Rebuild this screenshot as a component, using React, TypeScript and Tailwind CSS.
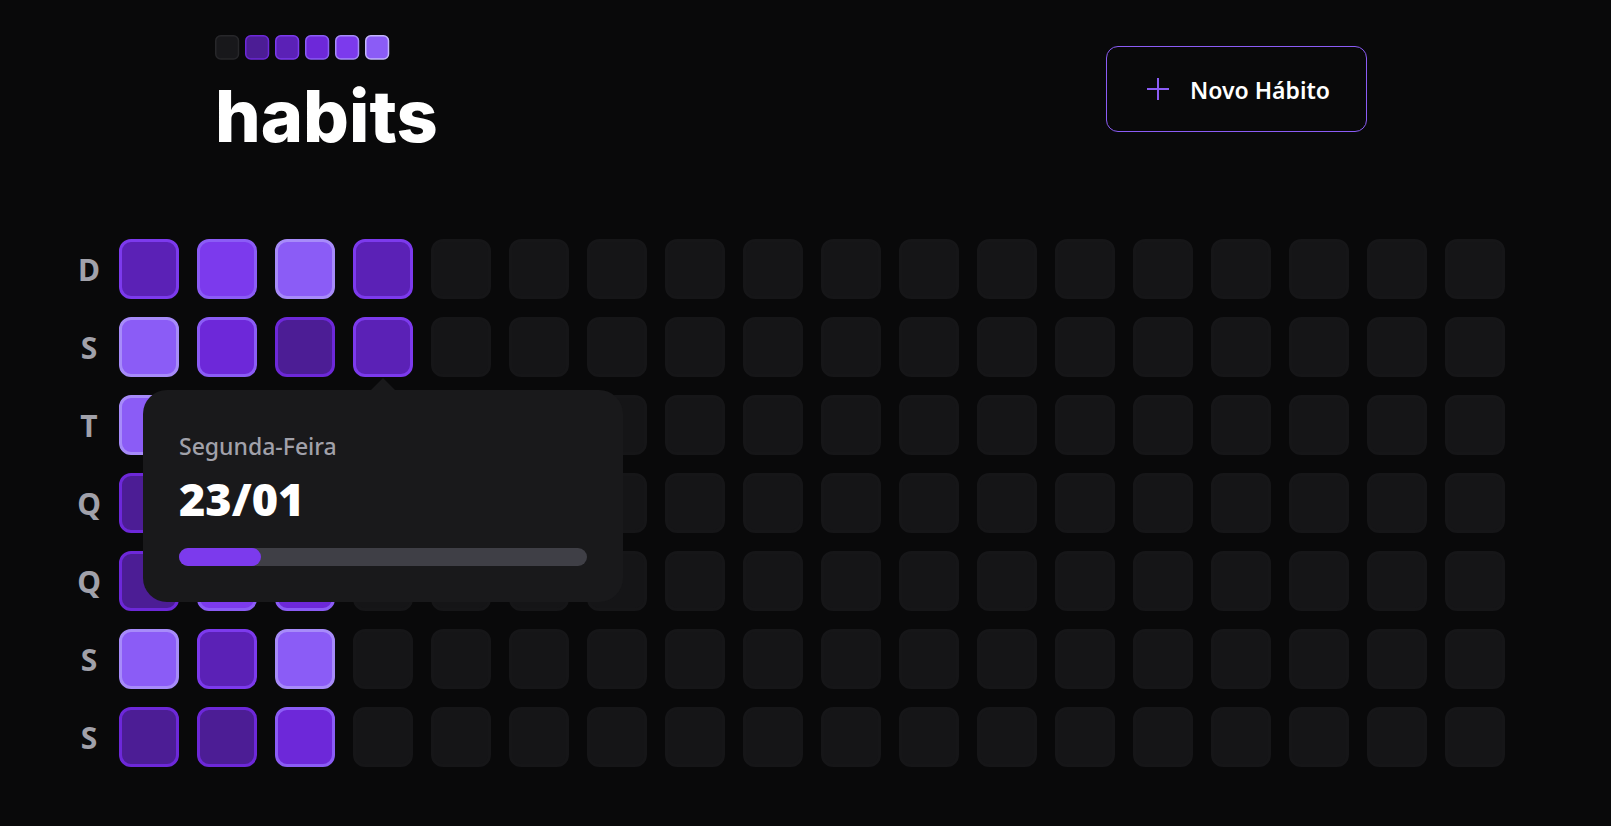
const LEVELS = [
  "bg-[#151517] border-[#161618]",
  "bg-[#4c1d95] border-[#6d28d9]",
  "bg-[#5b21b6] border-[#7c3aed]",
  "bg-[#6d28d9] border-[#8b5cf6]",
  "bg-[#7c3aed] border-[#8b5cf6]",
  "bg-[#8b5cf6] border-[#a78bfa]",
];

const LOGO_SWATCHES = [
  { fill: "#18181B", stroke: "#27272A" },
  { fill: "#4C1D95", stroke: "#6D28D9" },
  { fill: "#5B21B6", stroke: "#7C3AED" },
  { fill: "#6D28D9", stroke: "#8B5CF6" },
  { fill: "#7C3AED", stroke: "#A78BFA" },
  { fill: "#8B5CF6", stroke: "#C4B5FD" },
];

const WEEKS = 18;

const DAYS = [
  { label: "D", name: "Domingo", levels: [2, 4, 5, 2] },
  { label: "S", name: "Segunda-Feira", levels: [5, 3, 1, 2] },
  { label: "T", name: "Terça-Feira", levels: [5, 2, 3] },
  { label: "Q", name: "Quarta-Feira", levels: [1, 3, 4] },
  { label: "Q", name: "Quinta-Feira", levels: [1, 4, 3] },
  { label: "S", name: "Sexta-Feira", levels: [5, 2, 5] },
  { label: "S", name: "Sábado", levels: [1, 1, 3] },
];

const OPEN_DAY = { row: 1, week: 3 };

function Logo() {
  return (
    <div>
      <svg width="175" height="26" viewBox="0 0 175 26" aria-hidden="true">
        {LOGO_SWATCHES.map((s, i) => (
          <rect
            key={s.fill}
            x={0.75 + i * 30}
            y="0.75"
            width="22.75"
            height="23.25"
            rx="5"
            fill={s.fill}
            stroke={s.stroke}
            strokeWidth="1.5"
          />
        ))}
      </svg>
      <h1 className="font-[Inter,sans-serif] text-[72px] leading-[110px] font-extrabold text-white">habits</h1>
    </div>
  );
}

function Header() {
  return (
    <header className="mx-auto flex w-full max-w-[1152px] items-start justify-between">
      <Logo />
      <button
        type="button"
        className="mt-[11px] flex items-center gap-[18px] rounded-xl border border-[#8b5cf6] px-9 pt-[25px] pb-[23px] text-[23px] leading-9 font-semibold text-white"
      >
        <svg width="29" height="30" viewBox="0 0 29 30" className="-mt-0.5" aria-hidden="true">
          <path d="M15 4v22M4 15h22" stroke="#8b5cf6" strokeWidth="2" />
        </svg>
        Novo Hábito
      </button>
    </header>
  );
}

function DayPopover() {
  return (
    <div
      role="dialog"
      aria-label="Segunda-Feira, 23/01"
      className="absolute top-full left-1/2 z-10 mt-px flex w-[480px] -translate-x-1/2 flex-col items-center"
    >
      <svg width="24" height="12" viewBox="0 0 24 12" aria-hidden="true">
        <path d="M12 0 24 12H0Z" fill="#19191b" />
      </svg>
      <div className="flex w-full flex-col rounded-3xl bg-[#19191b] p-9">
        <span className="pt-0.5 text-[23px] leading-9 font-medium text-[#a1a1aa]">Segunda-Feira</span>
        <span className="mt-1 text-[45px] leading-[62px] font-black text-white">23/01</span>
        <div
          role="progressbar"
          aria-label="Progresso"
          aria-valuenow={20}
          aria-valuemin={0}
          aria-valuemax={100}
          className="mt-[18px] h-[18px] w-full rounded-full bg-[#3f3f46]"
        >
          <div className="h-full rounded-full bg-[#7c3aed]" style={{ width: "20%" }} />
        </div>
      </div>
    </div>
  );
}

function HabitGrid() {
  return (
    <section className="mx-auto flex w-full max-w-[1536px] flex-col gap-[18px] px-9">
      {DAYS.map((day, row) => (
        <div key={day.name} className="flex">
          <div
            title={day.name}
            className="flex size-[60px] shrink-0 items-center justify-center pt-0.5 text-[30px] leading-9 font-bold text-[#a1a1aa]"
          >
            {day.label}
          </div>
          <div className="flex gap-[18px]">
            {Array.from({ length: WEEKS }, (_, week) => (
              <div key={week} className="relative size-[60px] shrink-0">
                <button
                  type="button"
                  aria-label={`${day.name}, semana ${week + 1}`}
                  className={`block size-full rounded-xl border-3 ${LEVELS[day.levels[week] ?? 0]}`}
                />
                {row === OPEN_DAY.row && week === OPEN_DAY.week && <DayPopover />}
              </div>
            ))}
          </div>
        </div>
      ))}
    </section>
  );
}

export default function App() {
  return (
    <main className="flex min-h-screen flex-col gap-[68px] overflow-x-hidden bg-[#09090a] pt-[35px] pr-[29px] pb-15 font-['Noto_Sans',sans-serif]">
      <Header />
      <HabitGrid />
    </main>
  );
}
